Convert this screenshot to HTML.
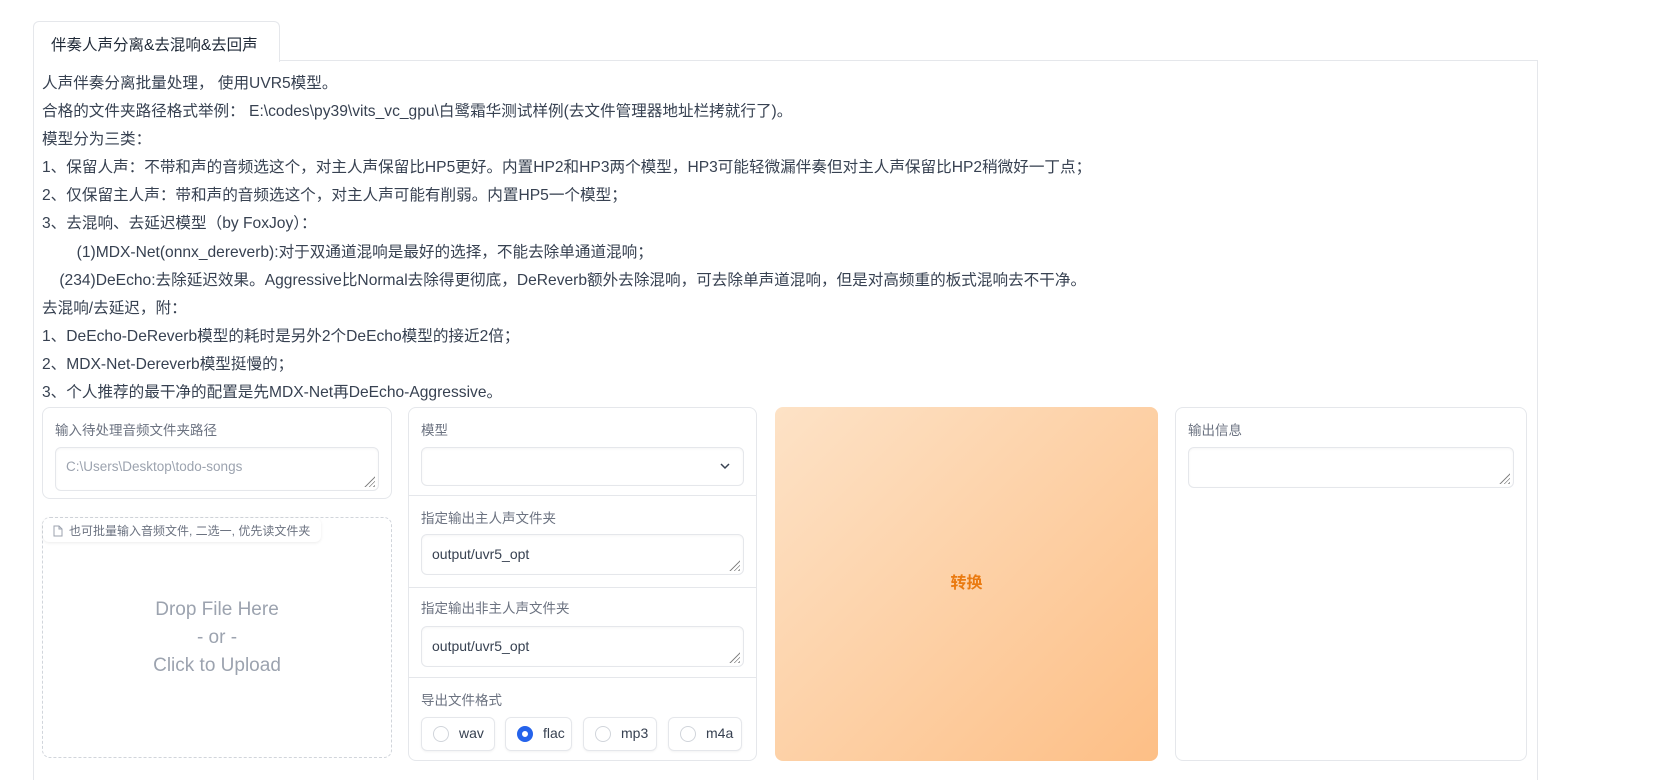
<!DOCTYPE html>
<html><head><meta charset="utf-8"><style>
*{box-sizing:border-box;margin:0;padding:0}
body{width:1680px;height:768px;overflow:hidden;background:#fff;font-family:"Liberation Sans","Noto Sans CJK SC",sans-serif;color:#1f2937;position:relative}
.abs{position:absolute}
.tab{left:33px;top:21px;width:247px;height:41px;border:1px solid #e5e7eb;border-bottom:none;border-radius:6px 6px 0 0;background:#fff;font-size:15.5px;padding:11px 0 0 17px;z-index:2}
.panel{left:33px;top:60px;width:1505px;height:720px;border:1px solid #e5e7eb;border-width:1px 1px 0 1px}
.txt{left:42px;top:70px;font-size:15.6px;line-height:28.1px;color:#374151;white-space:pre}
.box{border:1px solid #e5e7eb;border-radius:8px;background:#fff}
.lbl{font-size:13.5px;color:#6b7280}
.ta{border:1px solid #e5e7eb;border-radius:6px;background:#fff;box-shadow:inset 0 1px 2px rgba(0,0,0,.04);font-size:14px;padding:11px 10px;color:#374151}
.grip{position:absolute;right:3px;bottom:3px;width:11px;height:11px;background:repeating-linear-gradient(135deg,transparent 0 2px,#888 2px 3px);clip-path:polygon(100% 0,100% 100%,0 100%)}
.div{height:1px;background:#e5e7eb;left:408px;width:349px}
.rad{top:717px;height:34px;border:1px solid #e5e7eb;border-radius:6px;font-size:14px;color:#374151;box-shadow:0 1px 2px rgba(0,0,0,.05)}
.rad i{position:absolute;left:11px;top:8px;width:16px;height:16px;border:1px solid #d1d5db;border-radius:50%}
.rad span{position:absolute;left:37px;top:7px}
</style></head><body>
<div class="abs tab">伴奏人声分离&amp;去混响&amp;去回声</div>
<div class="abs panel"></div>
<div class="abs txt">人声伴奏分离批量处理， 使用UVR5模型。
合格的文件夹路径格式举例： E:\codes\py39\vits_vc_gpu\白鹭霜华测试样例(去文件管理器地址栏拷就行了)。
模型分为三类：
1、保留人声：不带和声的音频选这个，对主人声保留比HP5更好。内置HP2和HP3两个模型，HP3可能轻微漏伴奏但对主人声保留比HP2稍微好一丁点；
2、仅保留主人声：带和声的音频选这个，对主人声可能有削弱。内置HP5一个模型；
3、去混响、去延迟模型（by FoxJoy）：
        (1)MDX-Net(onnx_dereverb):对于双通道混响是最好的选择，不能去除单通道混响；
    (234)DeEcho:去除延迟效果。Aggressive比Normal去除得更彻底，DeReverb额外去除混响，可去除单声道混响，但是对高频重的板式混响去不干净。
去混响/去延迟，附：
1、DeEcho-DeReverb模型的耗时是另外2个DeEcho模型的接近2倍；
2、MDX-Net-Dereverb模型挺慢的；
3、个人推荐的最干净的配置是先MDX-Net再DeEcho-Aggressive。</div>

<div class="abs box" style="left:42px;top:407px;width:350px;height:92px"></div>
<div class="abs lbl" style="left:55px;top:419px">输入待处理音频文件夹路径</div>
<div class="abs ta" style="left:55px;top:447px;width:324px;height:44px;color:#9ca3af;font-size:13.5px">C:\Users\Desktop\todo-songs<div class="grip"></div></div>

<div class="abs" style="left:42px;top:517px;width:350px;height:241px;border:1px dashed #d1d5db;border-radius:8px"></div>
<div class="abs" style="left:43px;top:518px;width:278px;height:24px;border-radius:6px;box-shadow:0 1px 3px rgba(0,0,0,.08);font-size:12px;color:#6b7280;padding:4px 0 0 10px;background:#fff">
<svg width="10" height="12" viewBox="0 0 10 12" style="vertical-align:-2px;margin-right:6px"><path d="M1 1h5l3 3v7H1z M6 1v3h3" fill="none" stroke="#9ca3af"/></svg>也可批量输入音频文件, 二选一, 优先读文件夹</div>
<div class="abs" style="left:42px;top:596px;width:350px;text-align:center;font-size:19px;line-height:28px;color:#9ca3af">Drop File Here<br>- or -<br>Click to Upload</div>

<div class="abs box" style="left:408px;top:407px;width:349px;height:354px"></div>
<div class="abs lbl" style="left:421px;top:419px">模型</div>
<div class="abs ta" style="left:421px;top:447px;width:323px;height:39px"><svg class="abs" style="right:12px;top:14px" width="12" height="8" viewBox="0 0 12 8"><path d="M2 2l4 4 4-4" fill="none" stroke="#374151" stroke-width="1.5"/></svg></div>
<div class="abs div" style="top:495px"></div>
<div class="abs lbl" style="left:421px;top:507px">指定输出主人声文件夹</div>
<div class="abs ta" style="left:421px;top:534px;width:323px;height:41px">output/uvr5_opt<div class="grip"></div></div>
<div class="abs div" style="top:587px"></div>
<div class="abs lbl" style="left:421px;top:597px">指定输出非主人声文件夹</div>
<div class="abs ta" style="left:421px;top:626px;width:323px;height:41px">output/uvr5_opt<div class="grip"></div></div>
<div class="abs div" style="top:677px"></div>
<div class="abs lbl" style="left:421px;top:689px">导出文件格式</div>
<div class="abs rad" style="left:421px;width:74px"><i></i><span>wav</span></div>
<div class="abs rad" style="left:505px;width:67px"><i style="border:5px solid #2563eb"></i><span>flac</span></div>
<div class="abs rad" style="left:583px;width:74px"><i></i><span>mp3</span></div>
<div class="abs rad" style="left:668px;width:74px"><i></i><span>m4a</span></div>

<div class="abs" style="left:775px;top:407px;width:383px;height:354px;border-radius:8px;background:linear-gradient(135deg,#fde2c6,#fdbf86);text-align:center;line-height:354px;font-size:16px;font-weight:bold;color:#ea7a10">转换</div>

<div class="abs box" style="left:1175px;top:407px;width:352px;height:354px"></div>
<div class="abs lbl" style="left:1188px;top:419px">输出信息</div>
<div class="abs ta" style="left:1188px;top:447px;width:326px;height:41px"><div class="grip"></div></div>
</body></html>
